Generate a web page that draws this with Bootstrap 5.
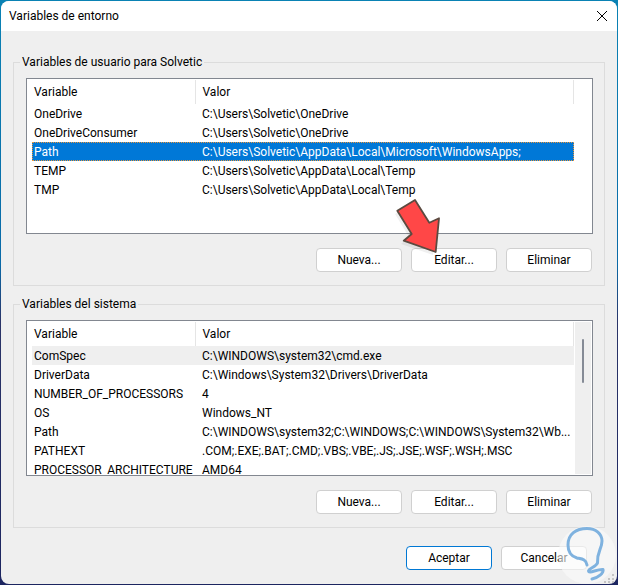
<!DOCTYPE html>
<html lang="es">
<head>
<meta charset="utf-8">
<meta name="viewport" content="width=device-width, initial-scale=1">
<title>Variables de entorno</title>
<link href="https://cdn.jsdelivr.net/npm/bootstrap@5.3.0/dist/css/bootstrap.min.css" rel="stylesheet">
<style>
  body {
    font-family: Roboto, "Open Sans", "Noto Sans", sans-serif;
    font-size: 12px;
    line-height: 18px;
    color: #000;
    background: linear-gradient(#0a82b4, #0a6aa8 45%, #2a3468 55%, #1c2560);
  }
  .dialog { margin: 1px; background: #efefef; border-radius: 8px; overflow: hidden; }
  .titlebar { background: #fff; height: 30px; padding: 0 1px 0 8px; }
  .title { font-size: 12px; line-height: 18px; }
  .close-btn { width: 28px; height: 28px; color: #000; }
  .content { padding: 22px 12px 13px 12px; }
  .group { border: 1px solid #dcdcdc; padding: 7px 11px 13px 12px; margin-bottom: 9px; }
  .group legend { float: none; width: auto; font-size: 12px; line-height: 18px; padding: 0 2px; margin: 0 0 0 -6px; }
  .list { height: 156px; background: #fff; border: 1px solid #828790; padding: 1px 1px 1px 5px; }
  .vars { table-layout: fixed; width: 100%; }
  .vars th, .vars td { padding: 0 2px; font-weight: 400; white-space: nowrap; }
  .vars td { padding-top: 1px; line-height: 18px; }
  .vars th { line-height: 24px; border-right: 1px solid #e5e5e5; }
  .vars th:first-child { width: 163px; }
  .vars th:last-child, .vars td:last-child { padding-left: 7px; }
  .selected { background: #0078d7; color: #fff; outline: 1px dotted #e8963c; outline-offset: -1px; }
  .hovered { background: #efefef; }
  .track { width: 17px; }
  .track-on { background: #efefef; border-left: 1px solid #fff; padding: 17px 0 0 7px; }
  .thumb { width: 2px; height: 44px; background: #858b96; border-radius: 1px; }
  .win-btn { width: 86px; height: 24px; padding: 0; font-size: 12px; line-height: 18px; color: #000; background: #fff; border: 1px solid #d0d0d0; border-radius: 4px; }
  .win-btn:hover { background: #e5f1fb; border-color: #0078d7; }
  .win-btn.primary { border-color: #0078d4; }
  .actions { gap: 9px; padding-right: 1px; }
  .group .actions { margin-top: 14px; }
  .footer-actions { margin-top: 18px; padding-right: 18px; }
  .arrow { left: -19px; top: -54px; z-index: 2; pointer-events: none; }
  .bulb { right: 0; bottom: 0; z-index: 2; pointer-events: none; }
</style>
<script src="https://cdn.jsdelivr.net/npm/bootstrap@5.3.0/dist/js/bootstrap.bundle.min.js"></script>
</head>
<body class="min-vh-100 d-flex flex-column">
<main class="dialog position-relative flex-grow-1 d-flex flex-column">
  <header class="titlebar d-flex align-items-center justify-content-between">
    <h1 class="title m-0 fw-normal">Variables de entorno</h1>
    <button type="button" class="close-btn btn p-0 border-0 d-flex align-items-center justify-content-center" aria-label="Cerrar">
      <svg width="12" height="12" viewBox="0 0 12 12" fill="none" stroke="currentColor" stroke-width="1"><path d="M1 1l10 10M11 1L1 11"/></svg>
    </button>
  </header>
  <form class="content flex-grow-1">
    <fieldset class="group">
      <legend>Variables de usuario para Solvetic</legend>
      <div class="list d-flex overflow-hidden">
        <div class="flex-grow-1 overflow-hidden">
          <table class="vars">
            <thead><tr><th scope="col">Variable</th><th scope="col">Valor</th></tr></thead>
            <tbody>
              <tr><td>OneDrive</td><td>C:\Users\Solvetic\OneDrive</td></tr>
              <tr><td>OneDriveConsumer</td><td>C:\Users\Solvetic\OneDrive</td></tr>
              <tr class="selected"><td>Path</td><td>C:\Users\Solvetic\AppData\Local\Microsoft\WindowsApps;</td></tr>
              <tr><td>TEMP</td><td>C:\Users\Solvetic\AppData\Local\Temp</td></tr>
              <tr><td>TMP</td><td>C:\Users\Solvetic\AppData\Local\Temp</td></tr>
            </tbody>
          </table>
        </div>
        <div class="track flex-shrink-0"></div>
      </div>
      <div class="actions d-flex justify-content-end">
        <button type="button" class="btn win-btn">Nueva...</button>
        <div class="position-relative">
          <button type="button" class="btn win-btn">Editar...</button>
          <svg class="arrow position-absolute" width="54" height="64" viewBox="392 194 54 64" aria-hidden="true">
            <path d="M413 203L427 226L437 222L433 255L401 244L409 237L395 214Z" fill="#000" opacity=".06"/>
            <path d="M415 200L429.300 222.700L439 218.300L435.700 252L403.700 240.700L411.700 234L397.300 210.700Z" fill="#ff4747" stroke="#5c4a40" stroke-width="1.8" stroke-linejoin="round"/>
          </svg>
        </div>
        <button type="button" class="btn win-btn">Eliminar</button>
      </div>
    </fieldset>
    <fieldset class="group mb-0">
      <legend>Variables del sistema</legend>
      <div class="list d-flex overflow-hidden">
        <div class="flex-grow-1 overflow-hidden">
          <table class="vars">
            <thead><tr><th scope="col">Variable</th><th scope="col">Valor</th></tr></thead>
            <tbody>
              <tr class="hovered"><td>ComSpec</td><td>C:\WINDOWS\system32\cmd.exe</td></tr>
              <tr><td>DriverData</td><td>C:\Windows\System32\Drivers\DriverData</td></tr>
              <tr><td>NUMBER_OF_PROCESSORS</td><td>4</td></tr>
              <tr><td>OS</td><td>Windows_NT</td></tr>
              <tr><td>Path</td><td>C:\WINDOWS\system32;C:\WINDOWS;C:\WINDOWS\System32\Wb...</td></tr>
              <tr><td>PATHEXT</td><td>.COM;.EXE;.BAT;.CMD;.VBS;.VBE;.JS;.JSE;.WSF;.WSH;.MSC</td></tr>
              <tr><td>PROCESSOR_ARCHITECTURE</td><td>AMD64</td></tr>
            </tbody>
          </table>
        </div>
        <div class="track track-on flex-shrink-0"><div class="thumb"></div></div>
      </div>
      <div class="actions d-flex justify-content-end">
        <button type="button" class="btn win-btn">Nueva...</button>
        <button type="button" class="btn win-btn">Editar...</button>
        <button type="button" class="btn win-btn">Eliminar</button>
      </div>
    </fieldset>
    <div class="actions footer-actions d-flex justify-content-end">
      <button type="button" class="btn win-btn primary">Aceptar</button>
      <button type="button" class="btn win-btn">Cancelar</button>
    </div>
  </form>
  <svg class="bulb position-absolute" width="60" height="60" viewBox="557 524 60 60" aria-hidden="true">
    <g fill="#c4c4c4"><path d="M612 574h2v2h-2zM608 578h2v2h-2zM612 578h2v2h-2zM604 581h2v2h-2zM608 581h2v2h-2zM612 581h2v2h-2z"/></g>
    <circle cx="587" cy="555" r="29" fill="#fafafa" opacity=".6"/>
    <path d="M587 565C586 559 582 559 577 558C570 556 568 550 568 545C568 534 576 528.500 587 528.500C596 528.500 602 534 602 541C602 549 597 551 597.500 563C596 567 589 568 588.500 571C589 574 597 569 603 569.500C604 573 598 578 592 579" fill="none" stroke="#7fb2df" stroke-width="3" stroke-linecap="round" stroke-linejoin="round"/>
  </svg>
</main>
</body>
</html>
